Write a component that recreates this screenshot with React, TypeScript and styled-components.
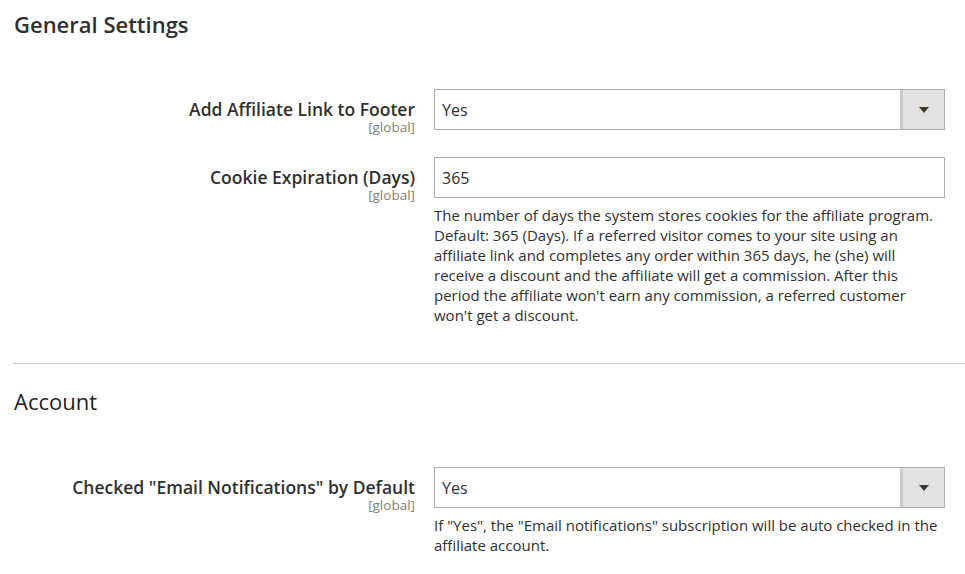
import React from 'react';
import styled, { createGlobalStyle } from 'styled-components';

const GlobalStyle = createGlobalStyle`
  html, body {
    margin: 0;
    padding: 0;
    background: #ffffff;
  }
  body {
    font-family: 'Open Sans', 'Liberation Sans', sans-serif;
    color: #303030;
  }
`;

const Page = styled.div`
  padding: 10px 0 0 13px;
`;

const Section = styled.section<{ divided?: boolean }>`
  padding-bottom: ${props => (props.divided ? '38px' : '0')};
  border-bottom: ${props => (props.divided ? '1px solid #cccccc' : 'none')};
  margin-bottom: ${props => (props.divided ? '23px' : '0')};
`;

const SectionTitle = styled.h2<{ light?: boolean }>`
  margin: 0 0 ${props => (props.light ? '52px' : '51px')} 1px;
  font-size: 22px;
  line-height: 28px;
  font-weight: ${props => (props.light ? 400 : 600)};
  color: ${props => (props.light ? '#1f1f1f' : '#303030')};
`;

const Fields = styled.div`
  display: flex;
  flex-direction: column;
  gap: 23px;
`;

const Row = styled.div`
  display: grid;
  grid-template-columns: 402px 511px;
  column-gap: 19px;
  align-items: start;
`;

const LabelCell = styled.div`
  display: flex;
  flex-direction: column;
  align-items: flex-end;
  padding-top: 9px;
  text-align: right;
`;

const Label = styled.label`
  font-size: 17.5px;
  line-height: 22px;
  font-weight: 600;
  color: #303030;
`;

const Scope = styled.span`
  font-size: 13.5px;
  line-height: 14px;
  color: #808080;
`;

const ControlCell = styled.div`
  display: flex;
  flex-direction: column;
`;

const SelectBox = styled.div`
  box-sizing: border-box;
  height: 41px;
  display: flex;
  align-items: stretch;
  border: 1px solid #adadad;
  background: #ffffff;
`;

const SelectValue = styled.span`
  flex: 1;
  display: flex;
  align-items: center;
  padding-left: 7px;
  font-size: 16px;
  color: #303030;
`;

const SelectButton = styled.span`
  width: 41px;
  display: flex;
  align-items: center;
  justify-content: center;
  background: #e3e3e3;
  border-left: 3px solid #cccccc;
`;

const Arrow = styled.span`
  width: 0;
  height: 0;
  border-left: 5px solid transparent;
  border-right: 5px solid transparent;
  border-top: 6px solid #41362f;
  margin-top: 1px;
`;

const TextInput = styled.input`
  box-sizing: border-box;
  height: 41px;
  width: 100%;
  margin: 0;
  padding: 0 7px;
  border: 1px solid #adadad;
  border-radius: 0;
  font-family: 'Open Sans', 'Liberation Sans', sans-serif;
  font-size: 16px;
  color: #303030;
  outline: none;
`;

const Note = styled.p`
  margin: 7px 0 0;
  font-size: 15px;
  line-height: 20px;
  color: #303030;
`;

interface FieldProps {
  label: string;
  children: React.ReactNode;
  note?: string;
}

function Field({ label, children, note }: FieldProps) {
  return (
    <Row>
      <LabelCell>
        <Label>{label}</Label>
        <Scope>[global]</Scope>
      </LabelCell>
      <ControlCell>
        {children}
        {note && <Note>{note}</Note>}
      </ControlCell>
    </Row>
  );
}

function Select({ value }: { value: string }) {
  return (
    <SelectBox>
      <SelectValue>{value}</SelectValue>
      <SelectButton>
        <Arrow />
      </SelectButton>
    </SelectBox>
  );
}

export default function App() {
  return (
    <>
      <GlobalStyle />
      <Page>
        <Section divided>
          <SectionTitle>General Settings</SectionTitle>
          <Fields>
            <Field label="Add Affiliate Link to Footer">
              <Select value="Yes" />
            </Field>
            <Field
              label="Cookie Expiration (Days)"
              note="The number of days the system stores cookies for the affiliate program. Default: 365 (Days). If a referred visitor comes to your site using an affiliate link and completes any order within 365 days, he (she) will receive a discount and the affiliate will get a commission. After this period the affiliate won't earn any commission, a referred customer won't get a discount."
            >
              <TextInput defaultValue="365" />
            </Field>
          </Fields>
        </Section>
        <Section>
          <SectionTitle light>Account</SectionTitle>
          <Fields>
            <Field
              label={'Checked "Email Notifications" by Default'}
              note={'If "Yes", the "Email notifications" subscription will be auto checked in the affiliate account.'}
            >
              <Select value="Yes" />
            </Field>
          </Fields>
        </Section>
      </Page>
    </>
  );
}
